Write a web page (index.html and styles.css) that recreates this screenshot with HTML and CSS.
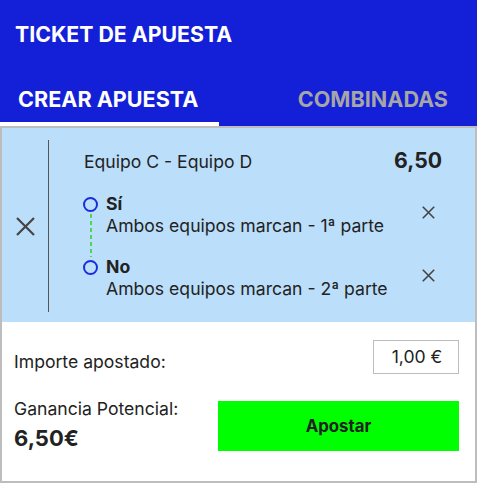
FILE: index.html
```html
<!DOCTYPE html>
<html lang="es">
<head>
<meta charset="utf-8">
<title>Ticket de apuesta</title>
<link rel="stylesheet" href="styles.css">
</head>
<body>
<header class="header">
  <div class="title">TICKET DE APUESTA</div>
  <nav class="tabs">
    <div class="tab tab-active">CREAR APUESTA</div>
    <div class="tab tab-inactive">COMBINADAS</div>
  </nav>
</header>
<main class="ticket">
  <section class="bet">
    <div class="bet-remove">
      <svg class="icon-x-big" viewBox="0 0 21 21" width="21" height="21"><path d="M2 2L19 19M19 2L2 19" stroke="#444" stroke-width="2.2" fill="none"/></svg>
    </div>
    <div class="bet-divider"></div>
    <div class="bet-content">
      <div class="match">
        <span class="match-name">Equipo C - Equipo D</span>
        <span class="match-odds">6,50</span>
      </div>
      <div class="selections">
        <div class="sel">
          <div class="sel-dot"><span class="dot dot-linked"></span></div>
          <div class="sel-text">
            <div class="sel-title">Sí</div>
            <div class="sel-desc">Ambos equipos marcan - 1ª parte</div>
          </div>
          <div class="sel-remove">
            <svg viewBox="0 0 13 13" width="13" height="13"><path d="M0.8 0.8L12.2 12.2M12.2 0.8L0.8 12.2" stroke="#444" stroke-width="1.6" fill="none"/></svg>
          </div>
        </div>
        <div class="sel">
          <div class="sel-dot"><span class="dot"></span></div>
          <div class="sel-text">
            <div class="sel-title">No</div>
            <div class="sel-desc">Ambos equipos marcan - 2ª parte</div>
          </div>
          <div class="sel-remove">
            <svg viewBox="0 0 13 13" width="13" height="13"><path d="M0.8 0.8L12.2 12.2M12.2 0.8L0.8 12.2" stroke="#444" stroke-width="1.6" fill="none"/></svg>
          </div>
        </div>
      </div>
    </div>
  </section>
  <section class="summary">
    <div class="stake-row">
      <span class="stake-label">Importe apostado:</span>
      <div class="stake-input">1,00 €</div>
    </div>
    <div class="win-row">
      <div class="win-info">
        <div class="win-label">Ganancia Potencial:</div>
        <div class="win-value">6,50€</div>
      </div>
      <button class="bet-button">Apostar</button>
    </div>
  </section>
</main>
</body>
</html>
```

FILE: styles.css
```css
* { box-sizing: border-box; }
html, body {
  margin: 0;
  padding: 0;
  background: #ffffff;
}
body {
  font-family: Inter, "Noto Sans", sans-serif;
  color: #222222;
  width: 477px;
  font-size: 17.6px;
}
.header {
  background: #1420d8;
  padding-top: 22px;
}
.title {
  color: #ffffff;
  font-weight: 700;
  font-size: 21.3px;
  line-height: 24px;
  padding-left: 15px;
  margin-bottom: 20px;
}
.tabs {
  display: flex;
  justify-content: space-between;
}
.tab {
  font-weight: 700;
  font-size: 21.6px;
  line-height: 26px;
  padding-top: 20px;
  padding-bottom: 10px;
  border-bottom: 4px solid transparent;
}
.tab-active {
  color: #ffffff;
  border-bottom-color: #ffffff;
  width: 219px;
  padding-left: 18px;
}
.tab-inactive {
  color: #a6a6a6;
  padding-right: 29px;
}
.ticket {
  border: 2px solid #bdbdbd;
  height: 357px;
}
.bet {
  background: #bbdefb;
  display: flex;
  height: 194px;
}
.bet-remove {
  width: 46px;
  display: flex;
  align-items: center;
  justify-content: center;
  padding-top: 3px;
}
.bet-divider {
  width: 1px;
  background: #555555;
  margin: 12px 0 10px;
}
.bet-content {
  flex: 1;
  padding: 20px 33px 0 34px;
}
.match {
  display: flex;
  justify-content: space-between;
  align-items: baseline;
  line-height: 24px;
}
.match-name {
  padding-left: 1px;
}
.match-odds {
  font-size: 21.2px;
  font-weight: 700;
}
.selections {
  margin-top: 19px;
  display: flex;
  flex-direction: column;
  gap: 20px;
}
.sel {
  display: flex;
  align-items: center;
}
.sel-dot {
  width: 23px;
  align-self: flex-start;
  padding-top: 3.5px;
}
.dot {
  display: block;
  position: relative;
  width: 15px;
  height: 15px;
  border: 2px solid #1a2ddb;
  border-radius: 50%;
}
.dot-linked::after {
  content: "";
  position: absolute;
  left: 4.5px;
  top: 15px;
  width: 2px;
  height: 43px;
  background: repeating-linear-gradient(to bottom, #4fd64f 0 4px, transparent 4px 7px);
}
.sel-text {
  flex: 1;
}
.sel-title {
  font-weight: 700;
  line-height: 22px;
}
.sel-desc {
  line-height: 21px;
}
.sel-remove {
  width: 13px;
  height: 13px;
  margin-right: 7px;
  margin-bottom: 5px;
  display: flex;
}
.summary {
  padding: 18px 16px 0 12px;
}
.stake-row {
  display: flex;
  justify-content: space-between;
  align-items: flex-end;
}
.stake-label {
  line-height: 24px;
}
.stake-input {
  width: 86px;
  height: 34px;
  border: 1px solid #bdbdbd;
  line-height: 32px;
  text-align: center;
  padding-left: 2px;
}
.win-row {
  display: flex;
  align-items: center;
  margin-top: 26px;
}
.win-info {
  flex: 1;
}
.win-label {
  line-height: 22px;
  margin-top: -2px;
}
.win-value {
  font-size: 22px;
  font-weight: 700;
  line-height: 28px;
  margin-top: 4px;
}
.bet-button {
  width: 241px;
  height: 50px;
  background: #00ff00;
  border: none;
  font-family: Inter, "Noto Sans", sans-serif;
  font-size: 16.8px;
  font-weight: 700;
  color: #222222;
  padding: 0;
}
```
